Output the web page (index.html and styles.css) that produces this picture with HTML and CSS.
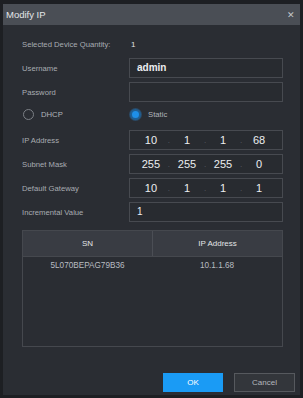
FILE: index.html
```html
<!DOCTYPE html>
<html lang="en">

<head>
    <meta charset="UTF-8">
    <meta name="viewport" content="width=device-width, initial-scale=1.0">
    <title>Modify IP</title>
    <link rel="stylesheet" href="styles.css">
</head>

<body>
    <div class="dialog">
        <div class="titlebar">
            <span class="title">Modify IP</span>
            <span class="close">&#x2715;</span>
        </div>

        <div class="content">
            <div class="form">
                <div class="label">Selected Device Quantity:</div>
                <div class="value">1</div>

                <div class="label">Username</div>
                <div class="box text-box bold">admin</div>

                <div class="label">Password</div>
                <div class="box text-box"></div>

                <div class="radio-row">
                    <span class="radio"></span>
                    <span class="radio-text">DHCP</span>
                </div>
                <div class="radio-row">
                    <span class="radio checked"></span>
                    <span class="radio-text">Static</span>
                </div>

                <div class="label">IP Address</div>
                <div class="box ip-box">
                    <span>10</span><i>.</i><span>1</span><i>.</i><span>1</span><i>.</i><span>68</span>
                </div>

                <div class="label">Subnet Mask</div>
                <div class="box ip-box">
                    <span>255</span><i>.</i><span>255</span><i>.</i><span>255</span><i>.</i><span>0</span>
                </div>

                <div class="label">Default Gateway</div>
                <div class="box ip-box">
                    <span>10</span><i>.</i><span>1</span><i>.</i><span>1</span><i>.</i><span>1</span>
                </div>

                <div class="label">Incremental Value</div>
                <div class="box text-box num">1</div>
            </div>

            <div class="table">
                <div class="thead">
                    <div class="th">SN</div>
                    <div class="th">IP Address</div>
                </div>
                <div class="tr">
                    <div class="td">5L070BEPAG79B36</div>
                    <div class="td">10.1.1.68</div>
                </div>
            </div>
        </div>

        <div class="footer">
            <button class="btn btn-ok">OK</button>
            <button class="btn btn-cancel">Cancel</button>
        </div>
    </div>
</body>

</html>
```

FILE: styles.css
```css
/* Global styles */

html,
body {
    margin: 0;
    height: 100%;
}

body {
    font-family: "Liberation Sans", Arial, sans-serif;
    background-color: #1d1f23;
    /* Dark frame round the dialog */
    padding: 4px 3px 3px 3px;
    box-sizing: border-box;
}

.dialog {
    height: 100%;
    display: flex;
    flex-direction: column;
    background-color: #2a2d33;
}
/* Title bar */

.titlebar {
    height: 21px;
    display: flex;
    align-items: center;
    justify-content: space-between;
    padding: 0 5px 0 3px;
    background-color: #4a4e55;
}

.title {
    font-size: 9.5px;
    color: #e4e6e8;
}

.close {
    font-size: 9px;
    color: #c4c6c9;
}
/* Form */

.content {
    padding: 9px 17px 0 19px;
}

.form {
    display: grid;
    grid-template-columns: 107px 154px;
    grid-auto-rows: 20px;
    row-gap: 4px;
    align-items: center;
}

.form > :first-child,
.form > :nth-child(2) {
    height: 19px;
    line-height: 19px;
}

.label {
    font-size: 7.7px;
    color: #a8acb2;
}

.value {
    font-size: 8px;
    color: #e0e2e4;
    padding-left: 2px;
}

.box {
    height: 20px;
    box-sizing: border-box;
    border: 1px solid #474a50;
    background-color: #282b30;
    color: #eceef0;
}

.text-box {
    padding-left: 7px;
    font-size: 10px;
    line-height: 18px;
}

.bold {
    font-weight: bold;
}

.num {
    font-size: 10px;
}

.ip-box {
    display: flex;
    align-items: center;
    padding: 0 6px 0 4px;
    font-size: 11px;
}

.ip-box span {
    flex: 1;
    text-align: center;
}

.ip-box i {
    font-style: normal;
    font-size: 8px;
    color: #5c6066;
}
/* Radios */

.radio-row {
    display: flex;
    align-items: center;
    height: 18px;
    margin-top: -4px;
}

.radio {
    width: 11px;
    height: 11px;
    box-sizing: border-box;
    border-radius: 50%;
    border: 1px solid #7c8086;
    margin-left: 1px;
}

.radio.checked {
    border: 2px solid #1f5f94;
    background-color: #1e8fe8;
    box-shadow: 0 0 0 1px #2b4a66;
}

.radio-text {
    font-size: 7.7px;
    color: #b0b4ba;
    margin-left: 7px;
}
/* Table */

.table {
    margin-top: 8px;
    width: 261px;
    height: 117px;
    box-sizing: border-box;
    border: 1px solid #45484e;
}

.thead,
.tr {
    display: grid;
    grid-template-columns: 129px 1fr;
}

.thead {
    height: 25px;
    background-color: #393c43;
    border-bottom: 1px solid #45484e;
}

.th {
    display: flex;
    align-items: center;
    justify-content: center;
    font-size: 8px;
    color: #e2e4e6;
}

.th + .th {
    border-left: 1px solid #4b4e55;
}

.td {
    height: 18px;
    line-height: 18px;
    text-align: center;
    font-size: 8.2px;
    color: #b8bcc1;
}
/* Buttons */

.footer {
    display: flex;
    justify-content: flex-end;
    gap: 11px;
    margin-top: 26px;
    padding-right: 5px;
}

.btn {
    width: 60px;
    height: 19px;
    font-family: "Liberation Sans", Arial, sans-serif;
    font-size: 8px;
    border: none;
    padding: 0;
}

.btn-ok {
    background-color: #1a9bf5;
    color: #ffffff;
}

.btn-cancel {
    width: 61px;
    background-color: #33363b;
    border: 1px solid #56595e;
    color: #b4b7bb;
}
```
